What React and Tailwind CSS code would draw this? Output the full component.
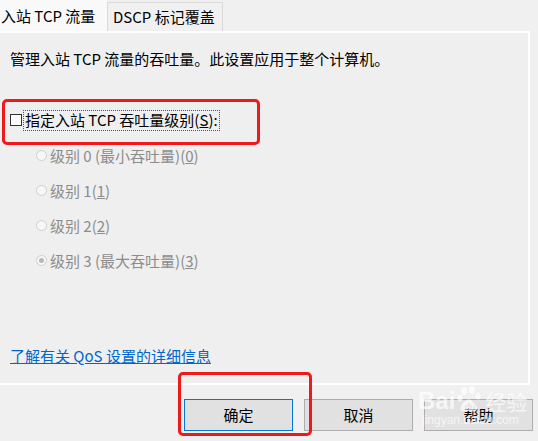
import React from "react";

const font = { fontFamily: '"Noto Sans CJK SC", "Noto Sans", sans-serif' };

function Radio({ checked }) {
  return (
    <span className="w-[11px] h-[11px] rounded-full border border-[#cfcfcf] bg-[#f7f7f7] flex items-center justify-center shrink-0">
      {checked && <span className="w-[5px] h-[5px] rounded-full bg-[#b8b8b8]"></span>}
    </span>
  );
}

export default function App() {
  const levels = [
    { label: "级别 0 (最小吞吐量)(", key: "0" },
    { label: "级别 1(", key: "1" },
    { label: "级别 2(", key: "2" },
    { label: "级别 3 (最大吞吐量)(", key: "3", checked: true },
  ];

  return (
    <div
      className="relative w-[538px] h-[441px] overflow-hidden bg-[#f0f0f0] text-[15px] text-black leading-[20px]"
      style={font}
    >
      {/* Tabs */}
      <div className="flex items-end h-[31px]">
        <div className="w-[107px] h-[31px] bg-[#f9f9f9] flex items-center pl-px">
          入站 TCP 流量
        </div>
        <div className="w-[116px] h-[29px] bg-[#f0f0f0] border border-b-0 border-[#d9d9d9] flex items-center pl-[5px]">
          DSCP 标记覆盖
        </div>
      </div>

      {/* Panel */}
      <div className="w-[530px] h-[354px] border-t-2 border-r-2 border-b-2 border-white bg-[#efefef] flex flex-col">
        <div className="h-[20px] mt-[16px] pl-[10px]">
          管理入站 TCP 流量的吞吐量。此设置应用于整个计算机。
        </div>

        <div className="h-[20px] mt-[41px] pl-[10px] flex items-center">
          <span className="w-[12px] h-[12px] border border-[#333] bg-white shrink-0"></span>
          <span className="ml-px px-px border border-dotted border-[#555] h-[21px] flex items-center">
            指定入站 TCP 吞吐量级别(<span className="underline">S</span>):
          </span>
        </div>

        <div className="mt-[8px] flex flex-col text-[#8c8c8c]">
          {levels.map((l) => (
            <div key={l.key} className="h-[35px] pl-[36px] flex items-center gap-[3px]">
              <Radio checked={l.checked} />
              <span>
                {l.label}
                <span className="underline">{l.key}</span>)
              </span>
            </div>
          ))}
        </div>

        <div className="mt-[68px] pl-[10px] h-[20px]">
          <span className="text-[#0066cc] underline">了解有关 QoS 设置的详细信息</span>
        </div>
      </div>

      {/* Buttons */}
      <div className="flex gap-[11px] pl-[184px] mt-[14px]">
        <button className="w-[109px] h-[32px] bg-[#e1e1e1] border border-[#0078d7]">确定</button>
        <button className="w-[109px] h-[32px] bg-[#e1e1e1] border border-[#adadad]">取消</button>
        <button className="w-[109px] h-[32px] bg-[#e1e1e1] border border-[#adadad]">帮助</button>
      </div>

      {/* Annotation boxes */}
      <div className="absolute left-[2px] top-[99px] w-[258px] h-[46px] border-[3px] border-[#f01818] rounded-[5px]"></div>
      <div className="absolute left-[178px] top-[372px] w-[134px] h-[64px] border-[3px] border-[#f01818] rounded-[5px]"></div>

      {/* Watermark */}
      <div className="absolute left-[418px] top-[383px] flex flex-col items-start text-white opacity-70 pointer-events-none">
        <div className="flex items-end h-[30px]">
          <span className="text-[24px] font-bold leading-[24px]" style={{ fontFamily: '"Liberation Sans", sans-serif' }}>Bai</span>
          <svg width="30" height="30" viewBox="0 0 30 30" className="-mb-[2px]">
            <g fill="white">
              <ellipse cx="9" cy="6" rx="3" ry="4" />
              <ellipse cx="17" cy="5" rx="3" ry="4" />
              <ellipse cx="5" cy="13" rx="2.5" ry="3.5" />
              <ellipse cx="23" cy="11" rx="2.5" ry="3.5" />
              <path d="M7 26c-3-1-1-7 3-10 3-2 6-2 8 1 3 3 6 6 3 9-2 1-5 0-7 0s-5 1-7 0z" />
            </g>
            <text x="10" y="25" fontSize="9" fill="#d8d8d8" fontFamily="Liberation Sans">du</text>
          </svg>
          <span className="text-[21px] leading-[24px]">经验</span>
        </div>
        <span className="text-[12px] leading-[14px] ml-[4px]" style={{ fontFamily: '"Liberation Sans", sans-serif' }}>jingyan.baidu.com</span>
      </div>
    </div>
  );
}
